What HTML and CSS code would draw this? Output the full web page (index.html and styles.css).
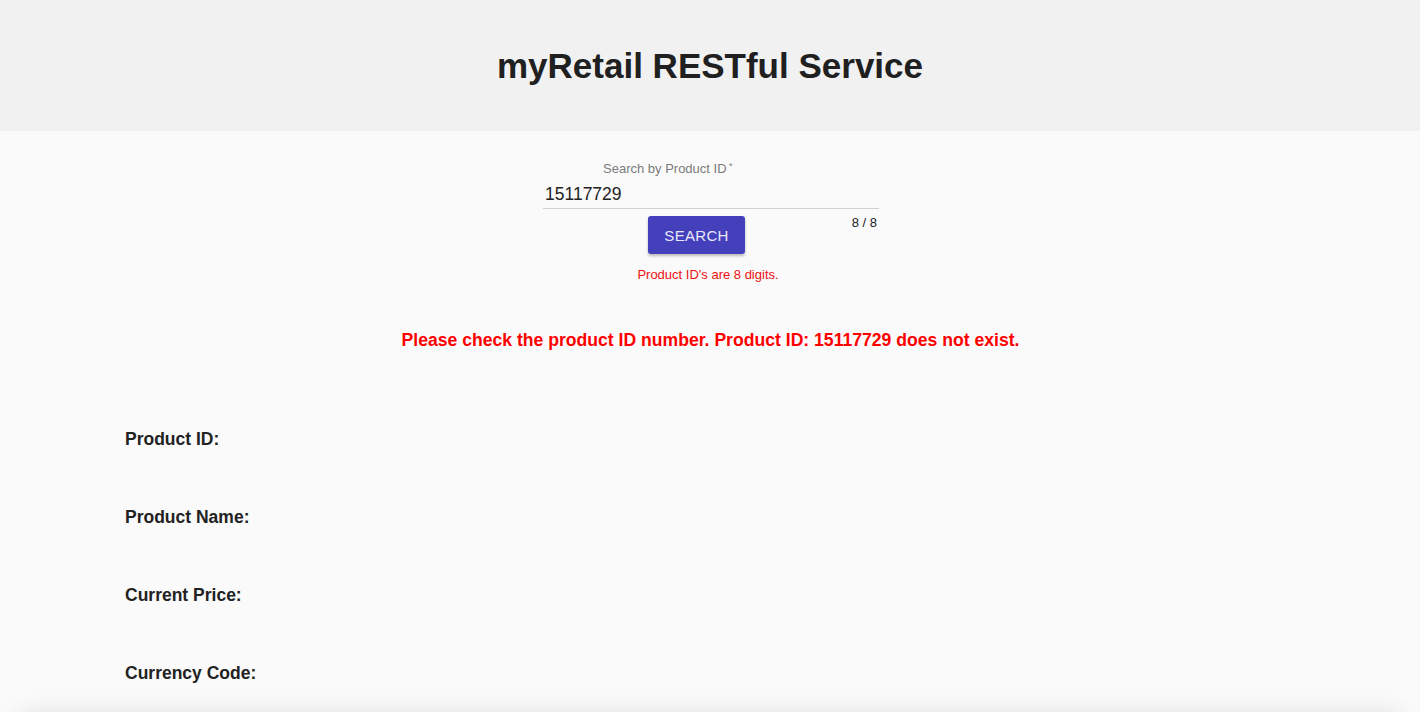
FILE: index.html
```html
<!DOCTYPE html>
<html>
<head>
<meta charset="utf-8">
<title>myRetail RESTful Service</title>
<link rel="stylesheet" href="styles.css">
</head>
<body>
<header class="header">
  <h1 class="title">myRetail RESTful Service</h1>
</header>
<main class="main">
  <form class="search">
    <div class="field">
      <label class="field-label">Search by Product ID<span class="req"> *</span></label>
      <div class="field-input">15117729</div>
      <span class="counter">8 / 8</span>
    </div>
    <button type="button" class="btn">SEARCH</button>
    <p class="helper">Product ID's are 8 digits.</p>
  </form>
  <p class="error">Please check the product ID number. Product ID: 15117729 does not exist.</p>
  <section class="details">
    <div class="row">Product ID:</div>
    <div class="row">Product Name:</div>
    <div class="row">Current Price:</div>
    <div class="row">Currency Code:</div>
  </section>
  <div class="card"></div>
</main>
</body>
</html>
```

FILE: styles.css
```css
* { box-sizing: border-box; }
html, body { margin: 0; padding: 0; }
body {
  background: #fafafa;
  font-family: "Liberation Sans", Arial, sans-serif;
  color: #222;
  overflow: hidden;
  height: 712px;
}
.header {
  background: #f1f1f1;
  height: 131px;
  display: flex;
  align-items: center;
  justify-content: center;
}
.title {
  margin: 0;
  font-size: 35px;
  font-weight: bold;
  color: #202020;
}
.main {
  display: flex;
  flex-direction: column;
}
.search {
  width: 336px;
  margin: 0 auto;
  padding-top: 27px;
  position: relative;
  left: 1px;
}
.field {
  position: relative;
  border-bottom: 1px solid #d0d0d0;
  height: 51px;
}
.field-label {
  display: block;
  font-size: 13px;
  line-height: 16px;
  color: #7a7a7a;
  margin-left: 60px;
}
.req { font-size: 9px; vertical-align: 4px; }
.field-input {
  font-size: 17.5px;
  line-height: 22px;
  color: #222;
  padding-left: 2px;
  margin-top: 6px;
}
.counter {
  position: absolute;
  right: 2px;
  top: 57px;
  font-size: 13px;
  color: #222;
}
.btn {
  display: block;
  margin: 7px 0 0 105px;
  width: 97px;
  height: 38px;
  border: none;
  border-radius: 3px;
  background: #4440bb;
  color: #e8e8f8;
  font-family: "Liberation Sans", Arial, sans-serif;
  font-size: 15px;
  letter-spacing: 0.3px;
  box-shadow: 0 2px 3px rgba(0,0,0,0.25);
  padding: 0;
}
.helper {
  margin: 13px 0 0;
  text-align: center;
  font-size: 13px;
  line-height: 15px;
  color: #ee1111;
  padding-right: 6px;
}
.error {
  margin: 48px 0 0;
  text-align: center;
  font-size: 17.6px;
  line-height: 20px;
  font-weight: bold;
  color: #f00;
  padding-left: 1px;
}
.details {
  padding-left: 125px;
  margin-top: 80px;
  display: flex;
  flex-direction: column;
  gap: 60px;
}
.row {
  font-size: 17.5px;
  font-weight: bold;
  line-height: 18px;
  color: #222;
}
.card {
  margin: 32px 12px 0;
  height: 60px;
  border-radius: 24px;
  background: #fafafa;
  box-shadow: 0 0 24px rgba(0,0,0,0.12);
}
```
